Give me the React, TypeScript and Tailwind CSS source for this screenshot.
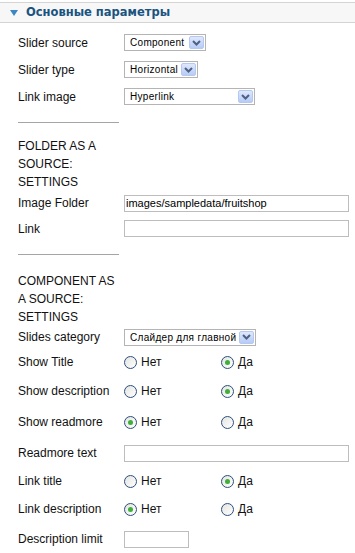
import React from "react";

function Arrow() {
  return (
    <span className="flex h-[13px] w-[15px] shrink-0 items-center justify-center rounded-[2px] border border-[#b5c8f2] bg-gradient-to-b from-[#dfe8fb] to-[#b7cbf5]">
      <svg width="9" height="6" viewBox="0 0 9 6">
        <path d="M1 1 L4.5 4.5 L8 1" fill="none" stroke="#4d6185" strokeWidth="2" />
      </svg>
    </span>
  );
}

function Select({ value, width }: { value: string; width: string }) {
  return (
    <div
      className={`flex h-[17px] items-center justify-between border border-[#b4b4b4] bg-white pl-[5px] pr-[1px] ${width}`}
    >
      <span className="whitespace-nowrap text-[10px] tracking-[0.3px] text-black">{value}</span>
      <Arrow />
    </div>
  );
}

function Input({ value = "", width = "w-[225px]" }: { value?: string; width?: string }) {
  return (
    <div
      className={`flex h-[17px] items-center border border-[#bdbdbd] bg-white pl-[1px] text-[11px] text-black ${width}`}
    >
      {value}
    </div>
  );
}

function Radio({ checked }: { checked: boolean }) {
  return (
    <span className="flex h-[13px] w-[13px] items-center justify-center rounded-full border border-[#2c4e7e] bg-gradient-to-br from-[#e4e4e0] to-white">
      {checked && <span className="h-[5px] w-[5px] rounded-full bg-[#3fae3a]" />}
    </span>
  );
}

function YesNo({ yes }: { yes: boolean }) {
  return (
    <div className="flex items-center">
      <div className="flex w-[97px] items-center gap-[4px]">
        <Radio checked={!yes} />
        <span>Нет</span>
      </div>
      <div className="flex items-center gap-[4px]">
        <Radio checked={yes} />
        <span>Да</span>
      </div>
    </div>
  );
}

function Row({ label, h, children }: { label: string; h: string; children?: React.ReactNode }) {
  return (
    <div className={`flex items-center ${h}`}>
      <div className="w-[106px] shrink-0">{label}</div>
      {children}
    </div>
  );
}

function Separator() {
  return (
    <div className="flex h-[24px] items-center">
      <div className="h-px w-[101px] bg-[#a5a5a5]" />
    </div>
  );
}

export default function App() {
  return (
    <div className="h-[553px] w-[355px] overflow-hidden bg-white pt-[2px] text-[12px] text-[#111] [font-family:'Liberation_Sans',Arial,sans-serif]">
      <div className="flex h-[21px] items-center gap-[8px] border-y border-[#d4d4d4] bg-[#f7f7f7] pl-[10px]">
        <svg width="8" height="6" viewBox="0 0 8 6">
          <path d="M0 0 H8 L4 6 Z" fill="#3a87c4" />
        </svg>
        <span className="text-[11.5px] font-bold text-[#1a5380] [font-family:'DejaVu_Sans',Verdana,sans-serif]">
          Основные параметры
        </span>
      </div>

      <div className="pl-[18px] pt-[6px]">
        <Row label="Slider source" h="h-[27px]">
          <Select value="Component" width="w-[82px]" />
        </Row>
        <Row label="Slider type" h="h-[27px]">
          <Select value="Horizontal" width="w-[74px]" />
        </Row>
        <Row label="Link image" h="h-[27px]">
          <Select value="Hyperlink" width="w-[131px]" />
        </Row>
        <Separator />
        <div className="pt-[3px] leading-[18px]">
          FOLDER AS A<br />
          SOURCE:<br />
          SETTINGS
        </div>
        <Row label="Image Folder" h="h-[24px]">
          <Input value="images/sampledata/fruitshop" />
        </Row>
        <Row label="Link" h="h-[27px]">
          <Input />
        </Row>
        <Separator />
        <div className="pt-[6px] leading-[18px]">
          COMPONENT AS<br />
          A SOURCE:<br />
          SETTINGS
        </div>
        <Row label="Slides category" h="h-[22px]">
          <Select value="Слайдер для главной" width="w-[132px]" />
        </Row>
        <Row label="Show Title" h="h-[28px]">
          <YesNo yes />
        </Row>
        <Row label="Show description" h="h-[30px]">
          <YesNo yes />
        </Row>
        <Row label="Show readmore" h="h-[32px]">
          <YesNo yes={false} />
        </Row>
        <Row label="Readmore text" h="h-[30px]">
          <Input />
        </Row>
        <Row label="Link title" h="h-[26px]">
          <YesNo yes />
        </Row>
        <Row label="Link description" h="h-[30px]">
          <YesNo yes={false} />
        </Row>
        <Row label="Description limit" h="h-[30px]">
          <Input width="w-[65px]" />
        </Row>
      </div>
    </div>
  );
}
